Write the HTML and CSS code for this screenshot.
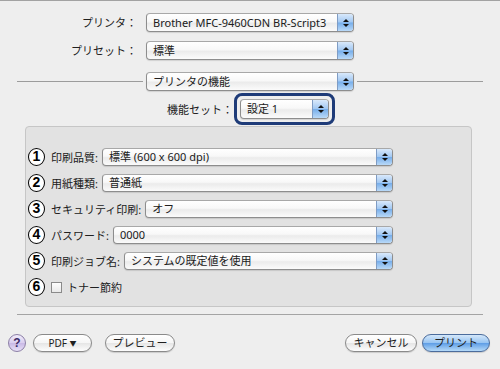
FILE: index.html
```html
<!DOCTYPE html>
<html lang="ja">
<head>
    <meta charset="UTF-8">
    <title>プリント</title>
    <link rel="stylesheet" href="styles.css">
</head>
<body>
    <!-- プリンタ / プリセット -->
    <div class="form">
        <div class="label">プリンタ：</div>
        <div class="popup"><span class="value">Brother MFC-9460CDN BR-Script3</span><span class="arrow"></span></div>
        <div class="label">プリセット：</div>
        <div class="popup"><span class="value">標準</span><span class="arrow"></span></div>
    </div>

    <!-- パネル選択 -->
    <div class="section">
        <div class="rule"></div>
        <div class="popup panel-select"><span class="value">プリンタの機能</span><span class="arrow"></span></div>
        <div class="rule"></div>
    </div>

    <div class="featureset">
        <div class="label">機能セット：</div>
        <div class="ring">
            <div class="popup small"><span class="value">設定 1</span><span class="arrow"></span></div>
        </div>
    </div>

    <!-- 機能パネル -->
    <div class="panel">
        <div class="row">
            <span class="num">1</span>
            <span class="rlabel">印刷品質:</span>
            <div class="popup"><span class="value">標準 (600 x 600 dpi)</span><span class="arrow"></span></div>
        </div>
        <div class="row">
            <span class="num">2</span>
            <span class="rlabel">用紙種類:</span>
            <div class="popup"><span class="value">普通紙</span><span class="arrow"></span></div>
        </div>
        <div class="row">
            <span class="num">3</span>
            <span class="rlabel">セキュリティ印刷:</span>
            <div class="popup"><span class="value">オフ</span><span class="arrow"></span></div>
        </div>
        <div class="row">
            <span class="num">4</span>
            <span class="rlabel">パスワード:</span>
            <div class="popup"><span class="value">0000</span><span class="arrow"></span></div>
        </div>
        <div class="row">
            <span class="num">5</span>
            <span class="rlabel">印刷ジョブ名:</span>
            <div class="popup"><span class="value">システムの既定値を使用</span><span class="arrow"></span></div>
        </div>
        <div class="row">
            <span class="num">6</span>
            <span class="check"></span>
            <span class="rlabel">トナー節約</span>
        </div>
    </div>

    <div class="sep"></div>

    <!-- ボタン -->
    <div class="buttons">
        <span class="help">?</span>
        <span class="btn pdf">PDF <span class="tri">▼</span></span>
        <span class="btn preview">プレビュー</span>
        <span class="spacer"></span>
        <span class="btn cancel">キャンセル</span>
        <span class="btn print">プリント</span>
    </div>
</body>
</html>
```

FILE: styles.css
```css
* {
    margin: 0;
    padding: 0;
    box-sizing: border-box;
}

body {
    font-family: "Noto Sans", "Noto Sans CJK JP", sans-serif;
    font-size: 11px;
    color: #202020;
    background-color: #eeeeee;
    border-top: 1px solid #a2a2a2;
    height: 369px;
    overflow: hidden;
}

/* Menus déroulants style Aqua */
.popup {
    display: flex;
    height: 19px;
    border: 1px solid #8d8d8d;
    border-top-color: #a8a8a8;
    border-radius: 4px;
    background: linear-gradient(#ffffff, #f8f8f8 45%, #ebebeb 55%, #fbfbfb);
    box-shadow: 0 1px 1px rgba(0, 0, 0, 0.12);
}

.popup .value {
    flex: 1;
    padding-left: 6px;
    line-height: 17px;
    white-space: nowrap;
    overflow: hidden;
}

.popup .arrow {
    width: 16px;
    display: flex;
    flex-direction: column;
    align-items: center;
    justify-content: center;
    gap: 2px;
    border-left: 1px solid #7f9cc4;
    border-radius: 0 3px 3px 0;
    background: linear-gradient(#d9e9fb, #a2c8f2 48%, #77aeea 52%, #b9d9f8);
}

.popup .arrow::before {
    content: "";
    border-left: 3px solid transparent;
    border-right: 3px solid transparent;
    border-bottom: 3px solid #111;
}

.popup .arrow::after {
    content: "";
    border-left: 3px solid transparent;
    border-right: 3px solid transparent;
    border-top: 3px solid #111;
}

/* Haut du dialogue */
.form {
    display: grid;
    grid-template-columns: 137px 208px;
    column-gap: 9px;
    row-gap: 9px;
    padding-top: 12px;
}

.label {
    text-align: right;
    line-height: 19px;
    white-space: nowrap;
}

.section {
    display: flex;
    align-items: center;
    gap: 3px;
    margin-top: 12px;
    padding: 0 17px;
}

.section .rule {
    flex: 1;
    height: 1px;
    background-color: #9c9c9c;
}

.panel-select {
    width: 208px;
}

.featureset {
    display: flex;
    align-items: center;
    margin-top: 2px;
}

.featureset .label {
    width: 233px;
}

.ring {
    margin-left: 1px;
    padding: 3px;
    border: 3px solid #1e3b78;
    border-radius: 8px;
}

.popup.small {
    width: 89px;
    height: 20px;
}

.popup.small .value {
    line-height: 18px;
}

/* Panneau gris */
.panel {
    margin: 1px 28px 0 25px;
    height: 181px;
    padding: 21px 78px 0 2px;
    background-color: #e2e2e2;
    border: 1px solid #c6c6c6;
    border-radius: 4px;
    display: flex;
    flex-direction: column;
    gap: 8px;
}

.row {
    display: flex;
    align-items: center;
    height: 18px;
}

.row .popup {
    flex: 1;
    height: 18px;
    margin-left: 4px;
}

.row .popup .value {
    line-height: 16px;
}

.num {
    width: 17px;
    height: 18px;
    border: 1.5px solid #000;
    border-radius: 50%;
    background-color: #fff;
    font-family: "Liberation Sans", sans-serif;
    font-weight: bold;
    font-size: 14px;
    line-height: 15px;
    text-align: center;
    color: #000;
    margin-right: 6px;
}

.rlabel {
    white-space: nowrap;
}

.check {
    width: 11px;
    height: 11px;
    border: 1px solid #8a8a8a;
    background: linear-gradient(#fdfdfd, #e9e9e9);
    margin-right: 5px;
}

.sep {
    margin: 7px 17px 0;
    height: 1px;
    background-color: #a4a4a4;
}

/* Boutons */
.buttons {
    display: flex;
    align-items: center;
    margin-top: 19px;
    padding: 0 10px 0 8px;
}

.help {
    width: 18px;
    height: 18px;
    border-radius: 50%;
    border: 1px solid #8c7fa6;
    background: linear-gradient(#f1ecfa, #d9cdef 50%, #c9b9e6 52%, #e8e0f7);
    color: #3b2a66;
    font-family: "Liberation Sans", sans-serif;
    font-weight: bold;
    font-size: 12px;
    line-height: 16px;
    text-align: center;
}

.btn {
    height: 18px;
    border: 1px solid #8a8a8a;
    border-radius: 9px;
    background: linear-gradient(#ffffff, #f6f6f6 48%, #e6e6e6 52%, #fdfdfd);
    box-shadow: 0 1px 1px rgba(0, 0, 0, 0.15);
    line-height: 16px;
    text-align: center;
    white-space: nowrap;
}

.pdf {
    width: 59px;
    margin-left: 7px;
    font-size: 10px;
}

.pdf .tri {
    font-size: 7px;
    vertical-align: 1px;
}

.preview {
    width: 70px;
    margin-left: 13px;
}

.spacer {
    flex: 1;
}

.cancel {
    width: 72px;
}

.print {
    width: 68px;
    margin-left: 5px;
    border-color: #4b6c9c;
    background: linear-gradient(#d4e7fa, #98c5f2 48%, #5f9ee6 52%, #b5daf9);
}
```
